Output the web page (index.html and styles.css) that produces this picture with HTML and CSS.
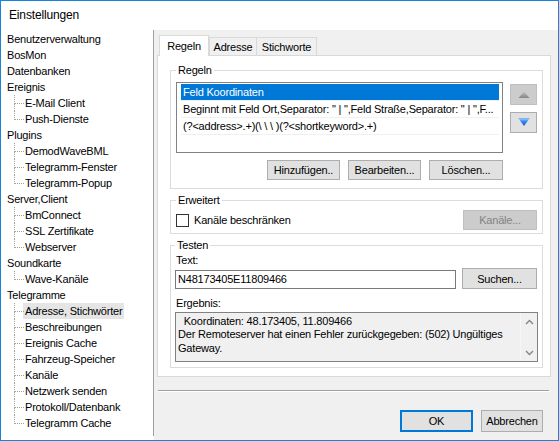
FILE: index.html
```html
<!DOCTYPE html>
<html>
<head>
<meta charset="utf-8">
<link rel="stylesheet" href="styles.css">
</head>
<body>
<div class="window">
  <div class="titlebar">Einstellungen</div>
  <div class="body">
    <ul class="tree">
      <li class="node">Benutzerverwaltung</li>
      <li class="node">BosMon</li>
      <li class="node">Datenbanken</li>
      <li class="node">Ereignis</li>
      <li class="child">E-Mail Client</li>
      <li class="child last">Push-Dienste</li>
      <li class="node">Plugins</li>
      <li class="child">DemodWaveBML</li>
      <li class="child">Telegramm-Fenster</li>
      <li class="child last">Telegramm-Popup</li>
      <li class="node">Server,Client</li>
      <li class="child">BmConnect</li>
      <li class="child">SSL Zertifikate</li>
      <li class="child last">Webserver</li>
      <li class="node">Soundkarte</li>
      <li class="child last">Wave-Kanäle</li>
      <li class="node">Telegramme</li>
      <li class="child"><span class="sel">Adresse, Stichwörter</span></li>
      <li class="child">Beschreibungen</li>
      <li class="child">Ereignis Cache</li>
      <li class="child">Fahrzeug-Speicher</li>
      <li class="child">Kanäle</li>
      <li class="child">Netzwerk senden</li>
      <li class="child">Protokoll/Datenbank</li>
      <li class="child last">Telegramm Cache</li>
    </ul>
    <div class="pane">
      <div class="tabs">
        <div class="tab active t-regeln">Regeln</div>
        <div class="tab t-adresse">Adresse</div>
        <div class="tab t-stich">Stichworte</div>
      </div>
      <div class="page">
        <fieldset class="group g-regeln">
          <legend>Regeln</legend>
          <div class="regeln-body">
            <div class="regeln-main">
              <div class="listbox">
                <div class="row selected">Feld Koordinaten</div>
                <div class="row">Beginnt mit Feld Ort,Separator: " | ",Feld Straße,Separator: " | ",F...</div>
                <div class="row">(?&lt;address&gt;.+)(\ \ \ )(?&lt;shortkeyword&gt;.+)</div>
              </div>
              <div class="btnrow">
                <button class="btn w73">Hinzufügen..</button>
                <button class="btn w73">Bearbeiten...</button>
                <button class="btn w74">Löschen...</button>
              </div>
            </div>
            <div class="arrows">
              <button class="arrow disabled">
                <svg width="12" height="8" viewBox="0 0 12 8">
                  <defs>
                    <linearGradient id="gup" x1="0" y1="0" x2="0" y2="1">
                      <stop offset="0" stop-color="#c4c4c4"/>
                      <stop offset="1" stop-color="#858585"/>
                    </linearGradient>
                  </defs>
                  <polygon points="6,0.5 11.5,7 0.5,7" fill="url(#gup)"/>
                </svg>
              </button>
              <button class="arrow">
                <svg width="12" height="9" viewBox="0 0 12 9">
                  <defs>
                    <linearGradient id="gdn" x1="0" y1="0" x2="0" y2="1">
                      <stop offset="0" stop-color="#a9d2ff"/>
                      <stop offset="0.35" stop-color="#3d8cf0"/>
                      <stop offset="1" stop-color="#1550c8"/>
                    </linearGradient>
                  </defs>
                  <polygon points="0.5,0.5 11.5,0.5 6,8" fill="url(#gdn)"/>
                  <polyline points="0.5,0.5 11.5,0.5" stroke="#7fb4f5" stroke-width="1" fill="none"/>
                </svg>
              </button>
            </div>
          </div>
        </fieldset>
        <fieldset class="group g-erw">
          <legend>Erweitert</legend>
          <div class="erw-row">
            <label class="check"><span class="box"></span><span>Kanäle beschränken</span></label>
            <button class="btn disabled w74">Kanäle...</button>
          </div>
        </fieldset>
        <fieldset class="group g-test">
          <legend>Testen</legend>
          <div class="lbl first">Text:</div>
          <div class="text-row">
            <div class="textbox">N48173405E11809466</div>
            <button class="btn search">Suchen...</button>
          </div>
          <div class="lbl second">Ergebnis:</div>
          <div class="result">
            <div class="result-text">
              <div class="line">  Koordinaten: 48.173405, 11.809466</div>
              <div class="line">Der Remoteserver hat einen Fehler zurückgegeben: (502) Ungültiges</div>
              <div class="line">Gateway.</div>
            </div>
            <div class="vscroll">
              <div class="sbtn">
                <svg width="9" height="6" viewBox="0 0 9 6"><polyline points="1,5 4.5,1.5 8,5" fill="none" stroke="#858585" stroke-width="1.4"/></svg>
              </div>
              <div class="sbtn">
                <svg width="9" height="6" viewBox="0 0 9 6"><polyline points="1,1 4.5,4.5 8,1" fill="none" stroke="#858585" stroke-width="1.4"/></svg>
              </div>
            </div>
          </div>
        </fieldset>
      </div>
      <div class="sep"></div>
      <div class="footer">
        <button class="btn ok">OK</button>
        <button class="btn cancel">Abbrechen</button>
      </div>
    </div>
  </div>
</div>
</body>
</html>
```
FILE: styles.css
```css
* { box-sizing: border-box; }
html, body { margin: 0; padding: 0; }
body {
  font-family: "Liberation Sans", Arial, sans-serif;
  font-size: 11px;
  letter-spacing: -0.2px;
  color: #000;
  background: #fff;
}
.window {
  width: 559px;
  height: 441px;
  border: 1px solid #1883d7;
  background: #fff;
  display: flex;
  flex-direction: column;
  overflow: hidden;
}
.titlebar {
  height: 29px;
  line-height: 29px;
  padding-left: 8px;
  font-size: 12px;
  letter-spacing: -0.15px;
  flex: none;
}
.body {
  flex: 1;
  display: flex;
  min-height: 0;
}

/* tree */
.tree {
  width: 153px;
  height: 406px;
  margin: 0;
  padding: 1px 0 0 0;
  list-style: none;
  border-right: 1px solid #a0a0a0;
  background: #fff;
  flex: none;
}
.tree li {
  height: 16px;
  line-height: 16px;
  padding-left: 6px;
  white-space: nowrap;
  position: relative;
}
.tree li.child { padding-left: 24px; }
.tree li.child::before {
  content: "";
  position: absolute;
  left: 13px;
  top: 0;
  width: 9px;
  height: 8px;
  border-left: 1px dotted #a0a0a0;
  border-bottom: 1px dotted #a0a0a0;
}
.tree li.child:not(.last)::after {
  content: "";
  position: absolute;
  left: 13px;
  top: 8px;
  height: 8px;
  border-left: 1px dotted #a0a0a0;
}
.tree .sel {
  display: inline-block;
  background: #e5e5e5;
  padding: 0 2px;
  margin-left: -2px;
}

/* right pane */
.pane {
  flex: 1;
  background: #f0f0f0;
  display: flex;
  flex-direction: column;
  padding: 5px 0 0 3px;
}
.tabs {
  display: flex;
  align-items: flex-end;
  height: 20px;
  padding-left: 2px;
  flex: none;
}
.tab {
  height: 18px;
  border: 1px solid #d9d9d9;
  border-bottom: none;
  background: #f0f0f0;
  display: flex;
  align-items: center;
  justify-content: center;
}
.tab.active {
  height: 21px;
  background: #fff;
  margin-bottom: -1px;
  position: relative;
  z-index: 1;
  padding-bottom: 1px;
}
.t-regeln { width: 50px; }
.t-adresse { width: 48px; }
.t-stich { width: 61px; margin-left: -1px; }

.page {
  width: 394px;
  height: 322px;
  border: 1px solid #d9d9d9;
  background: #fff;
  padding: 7px 7px 0 12px;
  flex: none;
}
.group {
  margin: 0;
  border: 1px solid #dcdcdc;
  padding: 5px 5px 8px 5px;
  min-width: 0;
}
.group legend {
  padding: 0 2px;
  line-height: 14px;
}
.g-erw { margin-top: 4px; padding-top: 3px; padding-bottom: 3px; }
.g-test { margin-top: 4px; padding-top: 1px; padding-bottom: 5px; padding-left: 4px; }

.regeln-body { display: flex; }
.regeln-main { width: 327px; }
.listbox {
  width: 327px;
  height: 71px;
  border: 1px solid #828282;
  background: #fff;
  padding: 1px 3px 0 4px;
}
.row {
  height: 17px;
  line-height: 16px;
  border-bottom: 1px solid #f0f0f0;
  padding-left: 2px;
  white-space: nowrap;
  overflow: hidden;
  background-clip: padding-box;
}
.row.selected { background-color: #0078d7; color: #fff; }
.btnrow {
  display: flex;
  justify-content: flex-end;
  gap: 8px;
  margin-top: 7px;
}
.btn {
  font-family: inherit;
  font-size: 11px;
  letter-spacing: inherit;
  color: #000;
  background: #e1e1e1;
  border: 1px solid #adadad;
  height: 20px;
  padding: 0;
  margin: 0;
  display: flex;
  align-items: center;
  justify-content: center;
}
.w73 { width: 73px; }
.w74 { width: 74px; }
.btn.disabled { background: #cccccc; border-color: #bfbfbf; color: #838383; }

.arrows {
  display: flex;
  flex-direction: column;
  gap: 7px;
  margin: 2px 0 0 7px;
}
.arrow {
  width: 27px;
  height: 21px;
  background: #e1e1e1;
  border: 1px solid #adadad;
  padding: 0;
  margin: 0;
  display: flex;
  align-items: center;
  justify-content: center;
}
.arrow.disabled { background: #cccccc; border-color: #bfbfbf; }
.arrow svg { display: block; }

.erw-row {
  display: flex;
  align-items: center;
  justify-content: space-between;
  height: 20px;
}
.check { display: flex; align-items: center; gap: 5px; }
.check .box {
  width: 13px;
  height: 13px;
  border: 1px solid #333;
  background: #fff;
}

.lbl { line-height: 14px; height: 14px; padding-left: 1px; }
.text-row {
  display: flex;
  align-items: flex-end;
  justify-content: space-between;
  height: 21px;
  margin-top: 1px;
}
.textbox {
  width: 281px;
  height: 19px;
  border: 1px solid #7a7a7a;
  background: #fff;
  line-height: 17px;
  padding-left: 2px;
  white-space: nowrap;
}
.search { width: 75px; height: 21px; }
.lbl.second { margin-top: 7px; }
.result {
  margin-top: 2px;
  width: 363px;
  height: 50px;
  border: 1px solid #828282;
  background: #f0f0f0;
  display: flex;
}
.result-text {
  flex: 1;
  padding: 2px 0 0 2px;
  line-height: 13.3px;
}
.line { white-space: pre; }
.vscroll {
  width: 17px;
  display: flex;
  flex-direction: column;
  justify-content: space-between;
  border-left: 1px solid #f7f7f7;
}
.sbtn {
  height: 17px;
  display: flex;
  align-items: center;
  justify-content: center;
}
.sbtn svg { display: block; }

.sep {
  margin: 13px 0 0 1px;
  width: 391px;
  height: 2px;
  border-top: 1px solid #a0a0a0;
  border-bottom: 1px solid #fff;
  flex: none;
}
.footer {
  display: flex;
  justify-content: flex-end;
  gap: 8px;
  margin-top: 18px;
  padding-right: 15px;
}
.ok { width: 73px; height: 22px; border: 2px solid #0078d7; }
.cancel { width: 62px; height: 22px; }
```
